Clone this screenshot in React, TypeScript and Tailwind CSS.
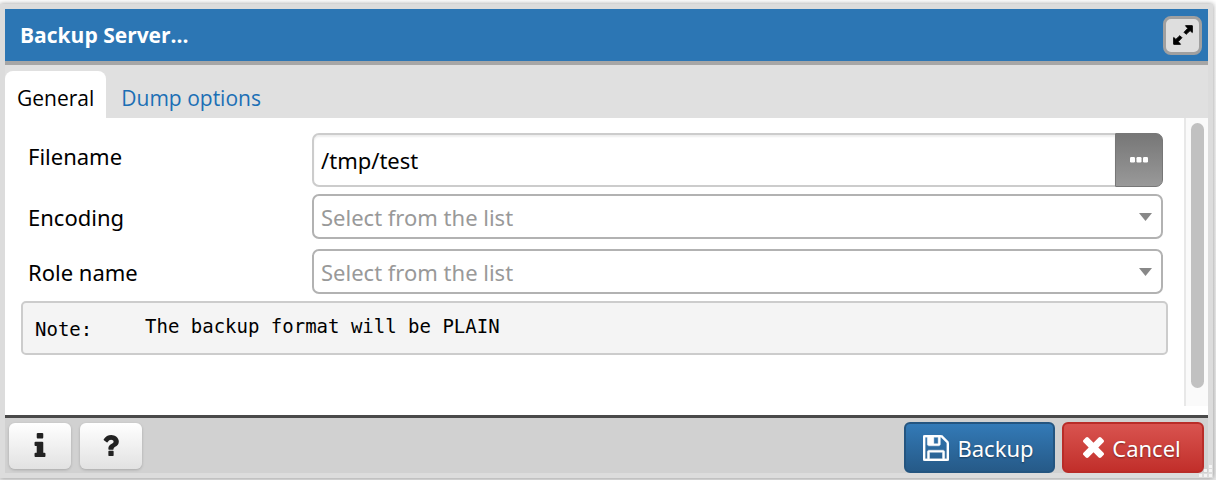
import React, { useState } from "react";

type IconProps = { className?: string };

const ExpandIcon = ({ className }: IconProps) => (
  <svg className={className} viewBox="0 0 20 20" fill="currentColor" stroke="currentColor" strokeLinejoin="round" aria-hidden="true">
    <path d="M12.500 .7h6.800v6.800l-2.200-1.900-4 3.700-2-2 3.700-3.900z" />
    <path d="M7.500 19.300H.7v-6.800l2.200 1.900 4-3.700 2 2-3.700 3.900z" />
  </svg>
);

const SaveIcon = ({ className }: IconProps) => (
  <svg className={className} viewBox="128 128 1536 1536" fill="currentColor" stroke="currentColor" strokeWidth="24" aria-hidden="true">
    <path d="M512 1536h768v-384h-768v384zm896 0h128v-896q0-14-10-38.5t-20-34.5l-281-281q-10-10-34-20t-39-10v416q0 40-28 68t-68 28h-576q-40 0-68-28t-28-68v-416h-128v1280h128v-416q0-40 28-68t68-28h832q40 0 68 28t28 68v416zm-384-928v-320q0-13-9.5-22.5t-22.5-9.5h-192q-13 0-22.5 9.5t-9.5 22.5v320q0 13 9.5 22.5t22.5 9.5h192q13 0 22.5-9.5t9.5-22.5zm640 32v928q0 40-28 68t-68 28h-1344q-40 0-68-28t-28-68v-1344q0-40 28-68t68-28h928q40 0 88 20t76 48l280 280q28 28 48 76t20 88z" />
  </svg>
);

const TimesIcon = ({ className }: IconProps) => (
  <svg className={className} viewBox="302 366 1188 1188" fill="currentColor" aria-hidden="true">
    <path d="M1490 1322q0 40-28 68l-136 136q-28 28-68 28t-68-28l-294-294-294 294q-28 28-68 28t-68-28l-136-136q-28-28-28-68t28-68l294-294-294-294q-28-28-28-68t28-68l136-136q28-28 68-28t68 28l294 294 294-294q28-28 68-28t68 28l136 136q28 28 28 68t-28 68l-294 294 294 294q28 28 28 68z" />
  </svg>
);

const InfoIcon = ({ className }: IconProps) => (
  <svg className={className} viewBox="576 128 640 1408" fill="currentColor" aria-hidden="true">
    <path d="M1216 1344v128q0 26-19 45t-45 19h-512q-26 0-45-19t-19-45v-128q0-26 19-45t45-19h64v-384h-64q-26 0-45-19t-19-45v-128q0-26 19-45t45-19h384q26 0 45 19t19 45v576h64q26 0 45 19t19 45zm-128-1152v192q0 26-19 45t-45 19h-256q-26 0-45-19t-19-45v-192q0-26 19-45t45-19h256q26 0 45 19t19 45z" />
  </svg>
);

const QuestionIcon = ({ className }: IconProps) => (
  <svg className={className} viewBox="448 256 960 1280" fill="currentColor" aria-hidden="true">
    <path d="M1088 1256v240q0 16-12 28t-28 12h-240q-16 0-28-12t-12-28v-240q0-16 12-28t28-12h240q16 0 28 12t12 28zm316-600q0 54-15.5 101t-35 76.5-55 59.5-57.5 43.5-61 35.5q-41 23-68.5 65t-27.5 67q0 17-12 32.5t-28 15.5h-240q-15 0-25.5-18.5t-10.5-37.5v-45q0-83 65-156.5t143-108.5q59-27 84-56t25-76q0-42-46.5-74t-107.5-32q-65 0-108 29-35 25-107 115-13 16-31 16-12 0-25-8l-164-125q-13-10-15.5-25t5.5-28q160-266 464-266 80 0 161 31t146 83 106 127.5 41 158.5z" />
  </svg>
);

const EllipsisIcon = ({ className }: IconProps) => (
  <svg className={className} viewBox="0 0 18 6" fill="currentColor" aria-hidden="true">
    <rect x="0" y="0" width="5" height="5.5" rx="1.2" />
    <rect x="6.5" y="0" width="5" height="5.5" rx="1.2" />
    <rect x="13" y="0" width="5" height="5.5" rx="1.2" />
  </svg>
);

const GripIcon = ({ className }: IconProps) => (
  <svg className={className} viewBox="0 0 14 14" fill="#f4f4f4" aria-hidden="true">
    <rect x="10" y="1" width="3" height="3" />
    <rect x="5" y="5" width="3" height="3" />
    <rect x="10" y="5" width="3" height="3" />
    <rect x="0" y="10" width="3" height="3" />
    <rect x="5" y="10" width="3" height="3" />
    <rect x="10" y="10" width="3" height="3" />
  </svg>
);

const SelectRow = ({ id, label }: { id: string; label: string }) => (
  <div className="flex items-center">
    <label htmlFor={id} className="w-[284px] shrink-0">{label}</label>
    <div className="relative flex-1">
      <select
        id={id}
        defaultValue=""
        className="block h-[45px] w-full appearance-none rounded-[7px] border-2 border-[#b2b2b2] bg-white px-[7px] text-[#999] outline-none"
      >
        <option value="">Select from the list</option>
      </select>
      <svg className="pointer-events-none absolute top-[19px] right-[11px] h-[8px] w-[13px]" viewBox="0 0 13 8" fill="#888" aria-hidden="true">
        <path d="M0 0h13L6.500 8z" />
      </svg>
    </div>
  </div>
);

const toolButton =
  "flex h-[46px] w-[62px] items-center justify-center rounded-[6px] bg-linear-to-b from-white to-[#e2e2e2] pb-[2px] text-[#222] shadow-[0_1px_3px_rgba(0,0,0,0.2)]";
const actionButton =
  "flex h-[51px] items-center justify-center gap-2 rounded-[6px] border-2 pr-[2px] font-['Noto_Sans',sans-serif] text-white [text-shadow:0_1px_2px_rgba(0,0,0,0.4)]";

export default function App() {
  const [filename, setFilename] = useState("/tmp/test");
  return (
    <div className="flex min-h-screen flex-col bg-linear-to-b from-white to-[#e8e8e8] pt-[4px] pr-[3px] pb-[2px] font-['Open_Sans',sans-serif] text-[22px] leading-[30px] text-black">
      <div className="relative flex flex-1 flex-col border-5 border-[#dcdcdc] shadow-[0_0_5px_rgba(0,0,0,0.4)]">
        <header className="flex h-[56px] items-center justify-between border-b-4 border-[#a6a6a6] bg-[#2c76b4] pr-[6px] pl-[15px]">
          <h1 className="text-[21px] font-bold text-white">Backup Server...</h1>
          <button type="button" aria-label="Maximize" className="flex size-[39px] items-center justify-center rounded-[8px] border-3 border-[#a0a0a0] bg-[#dedede] text-black">
            <ExpandIcon className="size-[20px]" />
          </button>
        </header>

        <div role="tablist" className="flex h-[53px] items-end bg-[#e0e0e0] text-[21px]">
          <button type="button" role="tab" aria-selected="true" className="h-[47px] rounded-t-[8px] bg-white px-[12px] pt-[6px]">General</button>
          <button type="button" role="tab" aria-selected="false" className="h-[47px] px-[15px] pt-[6px] text-[#1b6fb5]">Dump options</button>
        </div>

        <main className="flex flex-1 bg-white pb-[9px]">
          <form className="flex flex-1 flex-col px-[16px] pt-[15px] font-['Noto_Sans',sans-serif]">
            <div className="flex flex-col pr-[5px] pl-[7px]">
              <div className="mb-[7px] flex">
                <label htmlFor="filename" className="w-[284px] shrink-0 pt-[8px]">Filename</label>
                <div className="flex h-[54px] flex-1">
                  <input
                    id="filename"
                    value={filename}
                    onChange={(e) => setFilename(e.target.value)}
                    className="min-w-0 flex-1 rounded-l-[7px] border-2 border-r-0 border-[#ccc] px-[7px] shadow-[inset_0_2px_2px_rgba(0,0,0,0.07)] outline-none"
                  />
                  <button type="button" aria-label="Browse" className="flex w-[48px] items-center justify-center rounded-r-[7px] border border-[#777] bg-linear-to-b from-[#777] to-[#999] text-white">
                    <EllipsisIcon className="h-[6px] w-[18px]" />
                  </button>
                </div>
              </div>
              <div className="flex flex-col gap-[10px]">
                <SelectRow id="encoding" label="Encoding" />
                <SelectRow id="role" label="Role name" />
              </div>
            </div>
            <div className="mt-[7px] flex h-[54px] rounded-[5px] border-2 border-[#ccc] bg-[#f4f4f4] px-[12px] font-['DejaVu_Sans_Mono',monospace] text-[19px] leading-[26px]">
              <strong className="w-[110px] pt-[13px] font-normal">Note:</strong>
              <span className="pt-[10px]">The backup format will be PLAIN</span>
            </div>
          </form>
          <div className="flex w-[24px] justify-center border-l-2 border-[#e8e8e8] bg-[#fafafa] pt-[5px]">
            <div className="h-[265px] w-[13px] rounded-full bg-[#c1c1c1]" />
          </div>
        </main>

        <footer className="flex items-start justify-between border-t-3 border-[#4a4a4a] bg-[#d1d1d1] pt-[4px] pr-[4px] pl-[4px]">
          <div className="flex gap-[9px] pt-px">
            <button type="button" aria-label="Information" className={toolButton}>
              <InfoIcon className="h-[24px] w-[12px]" />
            </button>
            <button type="button" aria-label="Help" className={toolButton}>
              <QuestionIcon className="h-[21px] w-[16px]" />
            </button>
          </div>
          <div className="flex gap-[7px]">
            <button type="button" className={`${actionButton} w-[151px] border-[#245580] bg-linear-to-b from-[#337ab7] to-[#265a88]`}>
              <SaveIcon className="size-[26px]" />
              <span>Backup</span>
            </button>
            <button type="button" className={`${actionButton} w-[142px] border-[#b92c28] bg-linear-to-b from-[#d9534f] to-[#c12e2a]`}>
              <TimesIcon className="size-[21px]" />
              <span>Cancel</span>
            </button>
          </div>
        </footer>
        <GripIcon className="absolute -right-[5px] -bottom-[5px] size-[14px]" />
      </div>
    </div>
  );
}
